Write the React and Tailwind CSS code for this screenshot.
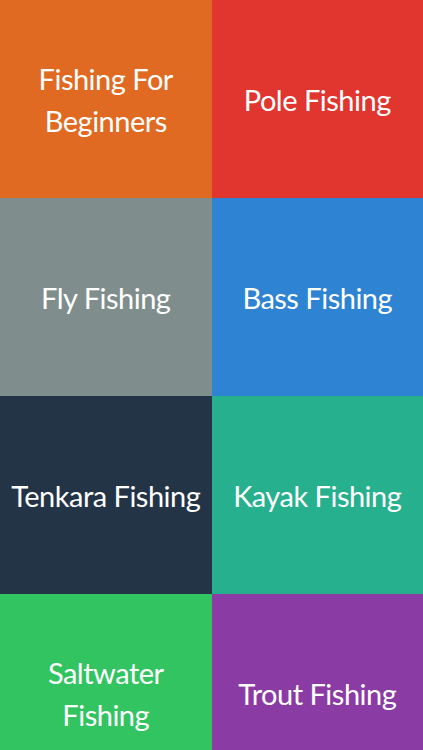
import React from "react";

const tiles = [
  { label: ["Fishing For", "Beginners"], bg: "bg-[#e06a22]" },
  { label: ["Pole Fishing"], bg: "bg-[#e1352f]" },
  { label: ["Fly Fishing"], bg: "bg-[#7f8d8c]" },
  { label: ["Bass Fishing"], bg: "bg-[#2e83d3]" },
  { label: ["Tenkara Fishing"], bg: "bg-[#243447]" },
  { label: ["Kayak Fishing"], bg: "bg-[#26b08e]" },
  { label: ["Saltwater", "Fishing"], bg: "bg-[#33c462]" },
  { label: ["Trout Fishing"], bg: "bg-[#8a3ca4]" },
];

export default function App() {
  return (
    <div className="w-[423px] h-[750px] overflow-hidden bg-white">
      <div className="grid grid-cols-2 auto-rows-[198px]">
        {tiles.map((t, i) => (
          <div
            key={i}
            className={`${t.bg} flex flex-col items-center justify-center text-white text-center text-[29px] tracking-[-0.5px] leading-[42px] pt-[2px]`}
            style={{ fontFamily: "Lato, 'Open Sans', sans-serif" }}
          >
            {t.label.map((l, j) => (
              <span key={j} className="whitespace-nowrap">{l}</span>
            ))}
          </div>
        ))}
      </div>
    </div>
  );
}
